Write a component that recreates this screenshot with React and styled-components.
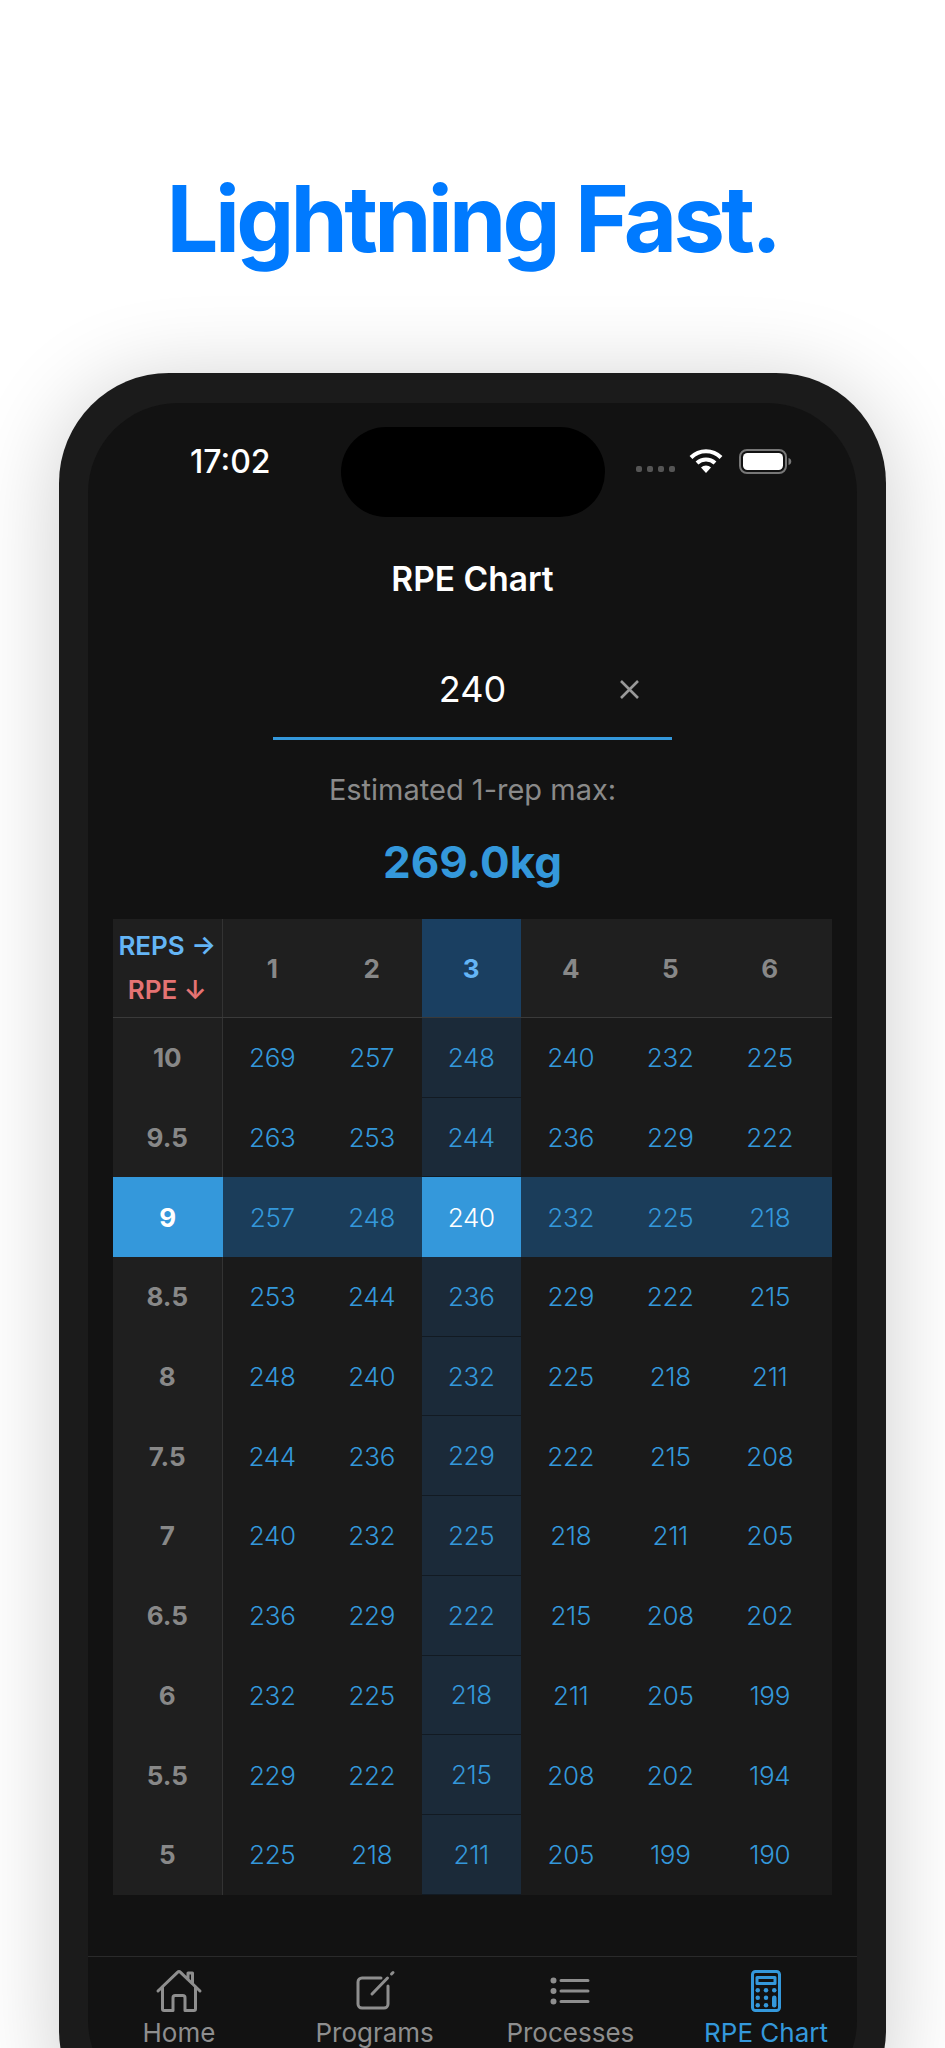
import React from 'react';
import styled, { createGlobalStyle } from 'styled-components';
import { IoHomeOutline, IoListOutline, IoCalculatorOutline } from 'react-icons/io5';

const blue = '#3498db';

const GlobalStyle = createGlobalStyle`
    html, body {
        margin: 0;
        padding: 0;
        background: #ffffff;
        font-family: "Inter", "Liberation Sans", sans-serif;
    }
`

const Page = styled.div`
    width: 945px;
    height: 2048px;
    overflow: hidden;
    display: flex;
    flex-direction: column;
    align-items: center;
    background: #ffffff;
`

const Headline = styled.h1`
    flex: 0 0 373px;
    box-sizing: border-box;
    margin: 0;
    padding-top: 161px;
    font-size: 92px;
    line-height: 116px;
    font-weight: 700;
    letter-spacing: -3.7px;
    color: #007aff;
    white-space: nowrap;
`

const Phone = styled.div`
    flex: 0 0 auto;
    box-sizing: border-box;
    width: 827px;
    height: 1767px;
    padding: 30px 29px;
    border-radius: 110px;
    background: #1b1b1b;
    box-shadow: 0 10px 90px rgba(0, 0, 0, 0.2);
`

const Screen = styled.div`
    position: relative;
    height: 100%;
    border-radius: 90px;
    background: #121212;
    display: flex;
    flex-direction: column;
    align-items: center;
`

const Island = styled.div`
    position: absolute;
    top: 24px;
    left: 253px;
    width: 264px;
    height: 90px;
    border-radius: 45px;
    background: #000000;
`

const StatusBar = styled.div`
    box-sizing: border-box;
    width: 100%;
    height: 28px;
    margin-top: 44px;
    padding: 0 65px 0 102px;
    display: flex;
    align-items: center;
    justify-content: space-between;
`

const Clock = styled.span`
    font-size: 32px;
    font-weight: 500;
    color: #ffffff;
`

const StatusIcons = styled.div`
    display: flex;
    align-items: center;
`

const SignalDots = styled.div`
    display: flex;
    gap: 5px;
    margin: 16px 14px 0 0;
`

const SignalDot = styled.i`
    width: 6px;
    height: 6px;
    border-radius: 2px;
    background: #555555;
`

const Title = styled.h2`
    margin: 84px 0 0;
    font-size: 33.5px;
    line-height: 40px;
    font-weight: 600;
    color: #ffffff;
`

const InputRow = styled.div`
    box-sizing: border-box;
    width: 399px;
    height: 99px;
    margin-top: 42px;
    border-bottom: 3px solid ${blue};
    display: grid;
    grid-template-columns: 1fr auto 1fr;
    align-items: center;
    font-size: 36px;
    color: #ffffff;
`

const InputValue = styled.span`
    grid-column: 2;
`

const ClearButton = styled.span`
    grid-column: 3;
    justify-self: end;
    display: flex;
    margin-right: 32px;
    color: #999999;
`

const EstimateLabel = styled.div`
    margin-top: 32px;
    font-size: 29px;
    line-height: 36px;
    color: #8a8a8a;
`

const EstimateValue = styled.div`
    margin-top: 26px;
    font-size: 44px;
    line-height: 56px;
    font-weight: 700;
    color: ${blue};
`

const Table = styled.div`
    width: 719px;
    margin-top: 29px;
    background: #1a1a1a;
`

const Row = styled.div`
    display: grid;
    grid-template-columns: 109.5px repeat(6, 99.5px) 1fr;
    height: ${p => (p.$header ? '99px' : '79.7px')};
    background: ${p => (p.$header ? '#1f1f1f' : p.$active ? '#1b3d5a' : 'transparent')};
    border-bottom: ${p => (p.$header ? '1px solid #3a3a3a' : 'none')};
    box-sizing: border-box;
`

const RowLabel = styled.div`
    display: flex;
    align-items: center;
    justify-content: center;
    font-size: 26px;
    font-weight: 700;
    color: ${p => (p.$active ? '#ffffff' : '#888888')};
    background: ${p => (p.$active ? blue : '#1f1f1f')};
    border-right: ${p => (p.$active ? 'none' : '1px solid #333333')};
`

const AxisLabel = styled.div`
    display: flex;
    flex-direction: column;
    align-items: center;
    justify-content: center;
    gap: 18px;
    border-right: 1px solid #333333;
    font-size: 26px;
    line-height: 26px;
    font-weight: 600;
    white-space: nowrap;
`

const Axis = styled.span`
    color: ${p => p.$color};
`

const HeadCell = styled.div`
    display: flex;
    align-items: center;
    justify-content: center;
    font-size: 26px;
    font-weight: 700;
    color: ${p => (p.$active ? '#64b5f6' : '#888888')};
    background: ${p => (p.$active ? '#1a3f61' : 'transparent')};
`

const Cell = styled.div`
    box-sizing: border-box;
    display: flex;
    align-items: center;
    justify-content: center;
    font-size: 26px;
    font-weight: 300;
    letter-spacing: -0.3px;
    color: ${p => (p.$cross ? '#ffffff' : blue)};
    background: ${p => (p.$cross ? blue : p.$column ? '#1b2a39' : 'transparent')};
    border-bottom: ${p => (p.$column && !p.$cross ? '1px solid #121a22' : 'none')};
`

const TabBar = styled.nav`
    box-sizing: border-box;
    width: 100%;
    margin-top: 61px;
    padding-top: 10px;
    border-top: 1px solid #2a2a2a;
    display: grid;
    grid-template-columns: repeat(4, 195.7px);
    justify-content: center;
`

const Tab = styled.div`
    display: flex;
    flex-direction: column;
    align-items: center;
    gap: 2px;
    font-size: 26px;
    line-height: 32px;
    color: ${p => (p.$active ? blue : '#8e8e8e')};
    svg {
        display: block;
    }
`

const chart = [
    ['10', 269, 257, 248, 240, 232, 225],
    ['9.5', 263, 253, 244, 236, 229, 222],
    ['9', 257, 248, 240, 232, 225, 218],
    ['8.5', 253, 244, 236, 229, 222, 215],
    ['8', 248, 240, 232, 225, 218, 211],
    ['7.5', 244, 236, 229, 222, 215, 208],
    ['7', 240, 232, 225, 218, 211, 205],
    ['6.5', 236, 229, 222, 215, 208, 202],
    ['6', 232, 225, 218, 211, 205, 199],
    ['5.5', 229, 222, 215, 208, 202, 194],
    ['5', 225, 218, 211, 205, 199, 190],
];

// the pen in the reference is a thin stroke, Ionicons' create icon is too chunky
const ProgramsIcon = ({ size }) => (
    <svg width={size} height={size} viewBox="0 0 48 48" fill="none" stroke="currentColor" strokeWidth="3" strokeLinecap="round">
        <path d="M30 11H11a4 4 0 0 0-4 4v22a4 4 0 0 0 4 4h22a4 4 0 0 0 4-4V19" />
        <path d="M21 27L36.5 11" />
        <path d="M40.5 7L42 5.5" />
    </svg>
);

const tabs = [
    { label: 'Home', Icon: IoHomeOutline },
    { label: 'Programs', Icon: ProgramsIcon },
    { label: 'Processes', Icon: IoListOutline },
    { label: 'RPE Chart', Icon: IoCalculatorOutline, active: true },
];

const WifiIcon = () => (
    <svg width="34" height="25" viewBox="0 0 33 25">
        <path d="M1.5 8.5a21 21 0 0 1 30 0" fill="none" stroke="#fff" strokeWidth="4" />
        <path d="M7.5 14a13 13 0 0 1 18 0" fill="none" stroke="#fff" strokeWidth="4" />
        <path d="M11.5 18.5a7 7 0 0 1 10 0L16.5 24z" fill="#fff" />
    </svg>
);

const BatteryLevel = styled.svg`
    margin-left: 16px;
`

const BatteryIcon = () => (
    <BatteryLevel width="53" height="25" viewBox="0 0 53 25">
        <rect x="1" y="1" width="46" height="23" rx="7" fill="none" stroke="#777" strokeWidth="2" />
        <rect x="4" y="4" width="40" height="17" rx="4.5" fill="#fff" />
        <path d="M49.5 9v7a3.6 3.6 0 0 0 0-7z" fill="#777" />
    </BatteryLevel>
);

const ClearIcon = () => (
    <svg width="21" height="21" viewBox="0 0 21 21">
        <path d="M2 2l17 17M19 2L2 19" stroke="currentColor" strokeWidth="2.6" />
    </svg>
);

export default function App() {
    return (
        <Page>
            <GlobalStyle />
            <Headline>Lightning Fast.</Headline>
            <Phone>
                <Screen>
                    <Island />
                    <StatusBar>
                        <Clock>17:02</Clock>
                        <StatusIcons>
                            <SignalDots>
                                <SignalDot />
                                <SignalDot />
                                <SignalDot />
                                <SignalDot />
                            </SignalDots>
                            <WifiIcon />
                            <BatteryIcon />
                        </StatusIcons>
                    </StatusBar>
                    <Title>RPE Chart</Title>
                    <InputRow>
                        <InputValue>240</InputValue>
                        <ClearButton><ClearIcon /></ClearButton>
                    </InputRow>
                    <EstimateLabel>Estimated 1-rep max:</EstimateLabel>
                    <EstimateValue>269.0kg</EstimateValue>
                    <Table>
                        <Row $header>
                            <AxisLabel>
                                <Axis $color="#64b5f6">REPS →</Axis>
                                <Axis $color="#e57373">RPE ↓</Axis>
                            </AxisLabel>
                            {[1, 2, 3, 4, 5, 6].map(n => (
                                <HeadCell key={n} $active={n === 3}>{n}</HeadCell>
                            ))}
                        </Row>
                        {chart.map(([rpe, ...values]) => (
                            <Row key={rpe} $active={rpe === '9'}>
                                <RowLabel $active={rpe === '9'}>{rpe}</RowLabel>
                                {values.map((v, i) => (
                                    <Cell key={i} $column={i === 2} $cross={i === 2 && rpe === '9'}>{v}</Cell>
                                ))}
                            </Row>
                        ))}
                    </Table>
                    <TabBar>
                        {tabs.map(({ label, Icon, active }) => (
                            <Tab key={label} $active={active}>
                                <Icon size={48} />
                                {label}
                            </Tab>
                        ))}
                    </TabBar>
                </Screen>
            </Phone>
        </Page>
    );
}
